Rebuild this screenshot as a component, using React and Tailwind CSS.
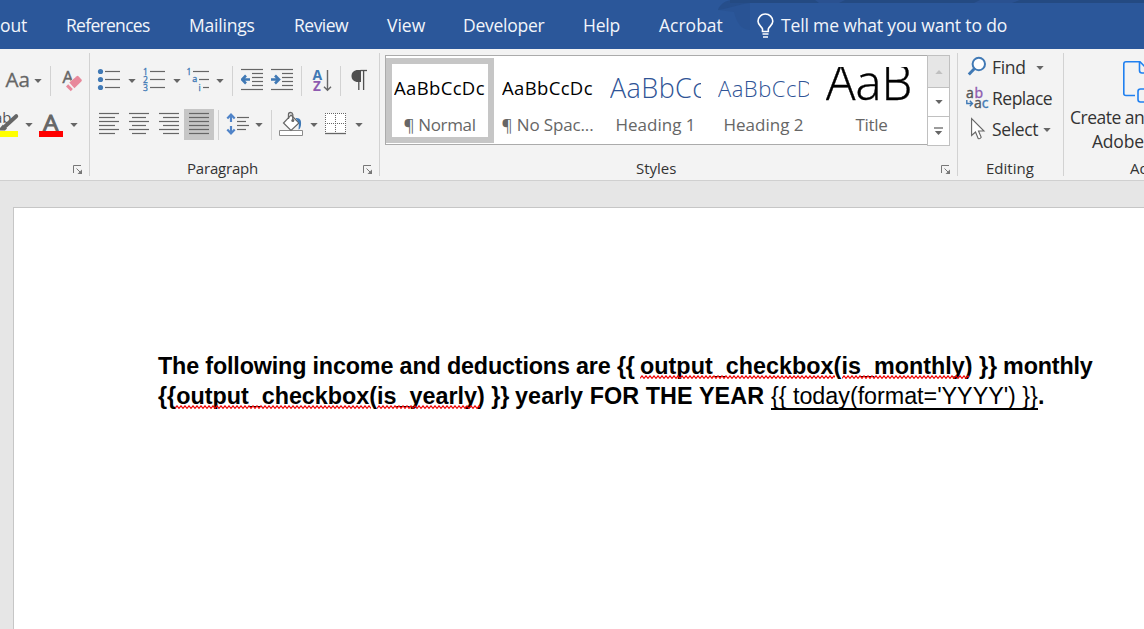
import React from 'react';

const G = '#666666';
const BLUE = '#4079b5';

function Icon({ w, h = 31, className = '', children }) {
  return (
    <svg width={w} height={h} viewBox={`0 0 ${w} ${h}`} fill="none" className={`block shrink-0 ${className}`}>
      {children}
    </svg>
  );
}

function Arrow({ className = '' }) {
  return (
    <Icon w={8} h={4} className={className}>
      <path d="M0.3 0h7.4L4 4z" fill={G} />
    </Icon>
  );
}

function Sep({ className = '' }) {
  return <div className={`h-[30px] w-px shrink-0 bg-[#d2d2d2] ${className}`} />;
}

function Lines({ rows, x = 0 }) {
  return rows.map(([a, b, y], i) => (
    <path key={i} d={`M${a + x} ${y}H${b + x}`} stroke={G} strokeWidth="1.2" />
  ));
}

function Launcher({ className = '' }) {
  return (
    <Icon w={10} h={10} className={className}>
      <path d="M0.5 8V0.5H8" stroke="#777" />
      <path d="M3.5 3.5L7.5 7.5" stroke="#777" />
      <path d="M9 4.5V9H4.5z" fill="#777" />
    </Icon>
  );
}

function GroupLabel({ children, className = '' }) {
  return (
    <div className={`flex h-5 items-center whitespace-nowrap text-[15px] text-[#333] ${className}`}>{children}</div>
  );
}

const tabs = [
  ['References', 'w-[123px] tracking-[-0.7px]'],
  ['Mailings', 'w-[105px] tracking-[-0.2px]'],
  ['Review', 'w-[93px] tracking-[-0.5px]'],
  ['View', 'w-[76px]'],
  ['Developer', 'w-[120px] tracking-[-0.25px]'],
  ['Help', 'w-[76px] tracking-[-0.2px]'],
  ['Acrobat', 'w-[97px]'],
];

function TabBar() {
  return (
    <header className="relative h-[49px] overflow-hidden bg-[#2b579a] text-[17.5px] text-[#f2f5fa]">
      <svg className="absolute left-[710px] top-0" width="434" height="34" viewBox="0 0 434 34" fill="none">
        <path d="M8 10C10 4 16 0 24 0H40V30C30 30 26 20 24 12z" fill="#295394" />
        <path d="M8 10C10 4 16 0 24 0H40V3C30 4 20 8 8 10z" fill="#264e8b" />
        <path d="M20 0H434V3H20z" fill="#244a82" />
        <path d="M105 0h30l-6 3h-20zM270 0h40l-8 3h-38z" fill="#2a5190" />
      </svg>
      <div className="relative flex h-full items-center pt-0.5 whitespace-nowrap">
        <div className="flex w-[66px] justify-start">
          <span className="tracking-[-0.1px]">out</span>
        </div>
        {tabs.map(([t, c]) => (
          <div key={t} className={`shrink-0 ${c}`}>
            {t}
          </div>
        ))}
        <Icon w={25} h={26}>
          <path
            d="M6.5 18.5V16C5.5 13.5 2 12 2 8.2A7.4 7.4 0 0 1 9.4 1a7.4 7.4 0 0 1 7.4 7.2c0 3.8-3.5 5.3-4.5 7.8v2.5zM6.5 21h6M7 24h5"
            stroke="#fff"
            strokeWidth="1.6"
          />
        </Icon>
        <span className="tracking-[-0.15px]">Tell me what you want to do</span>
      </div>
    </header>
  );
}

function FontGroup() {
  return (
    <section className="flex h-full w-[90px] shrink-0 flex-col">
      <div className="mt-4 flex h-[31px] items-center">
        <Icon w={34}>
          <text x="5.5" y="22" fontSize="20.5" fontFamily="Open Sans" fill={G} stroke={G} strokeWidth="0.3" textLength="24.5" lengthAdjust="spacingAndGlyphs">
            Aa
          </text>
        </Icon>
        <Arrow />
        <Sep className="ml-2" />
        <Icon w={24} className="ml-[10px]">
          <text x="1.5" y="17.5" fontSize="17" fontFamily="Open Sans" fill={G} stroke={G} strokeWidth="0.5">
            A
          </text>
          <path d="M5 20.5L15.5 10.5 21.8 16.5 11.2 26.8z" fill="#f3f3f3" />
          <path d="M8.3 17.6L15.7 11.2Q16.7 10.4 17.7 11.4L20.5 14.4Q21.3 15.5 20.3 16.5L13.4 23.2z" fill="#e8889b" />
          <path d="M7.2 19.2L11.8 24 9.8 26.2 5 21.6z" fill="#e8889b" />
        </Icon>
      </div>
      <div className="mt-[13px] flex h-[31px] items-center">
        <Icon w={25}>
          <text x="-6" y="14" fontSize="15" fontFamily="Open Sans" fill="#555">
            ab
          </text>
          <path d="M18 7L6.5 18.5" stroke="#f3f3f3" strokeWidth="6" />
          <path d="M16.2 7.2L5.5 17" stroke={G} strokeWidth="4" strokeLinecap="round" />
          <path d="M3 15.5L7 19.5L5 21.5H0V19z" fill={G} />
          <path d="M0 22H18V28H0z" fill="#ffff00" />
        </Icon>
        <Arrow className="mt-px" />
        <Icon w={24} className="ml-[6px]">
          <text x="4" y="21.5" fontSize="22" fontFamily="Open Sans" fill={G} stroke={G} strokeWidth="0.9" textLength="15.5" lengthAdjust="spacingAndGlyphs">
            A
          </text>
          <path d="M0 22H24V28H0z" fill="#ff0000" />
        </Icon>
        <Arrow className="ml-[7px] mt-px" />
      </div>
      <div className="mt-[18px] flex h-5 items-center">
        <Launcher className="ml-[73px] mt-[3px]" />
      </div>
    </section>
  );
}

function ParagraphGroup() {
  return (
    <section className="flex h-full w-[290px] shrink-0 flex-col">
      <div className="mt-4 flex h-[31px] items-center">
        <Icon w={31} className="ml-[7px]">
          <circle cx="3.5" cy="6.5" r="2.6" fill={BLUE} />
          <circle cx="3.5" cy="14.5" r="2.6" fill={BLUE} />
          <circle cx="3.5" cy="22.5" r="2.6" fill={BLUE} />
          <Lines rows={[[8, 23, 6.5], [8, 23, 14.5], [8, 23, 22.5]]} />
        </Icon>
        <Arrow />
        <Icon w={31} className="ml-[6px]">
          <g fill={BLUE} stroke={BLUE} strokeWidth="0.3" fontFamily="Open Sans" fontSize="8.5">
            <text x="1" y="10">1</text>
            <text x="1" y="18">2</text>
            <text x="1" y="26">3</text>
          </g>
          <Lines rows={[[8, 23, 6.5], [8, 23, 14.5], [8, 23, 22.5]]} />
        </Icon>
        <Arrow />
        <Icon w={30} className="ml-[5px]">
          <g fill={BLUE} stroke={BLUE} strokeWidth="0.3" fontFamily="Open Sans" fontSize="8.5">
            <text x="0.5" y="10">1</text>
            <text x="6.3" y="17" fontSize="9">a</text>
            <text x="12.5" y="25.5">i</text>
          </g>
          <Lines rows={[[7, 23, 6.5], [13, 23, 14.5], [17, 23, 22.5]]} />
        </Icon>
        <Arrow />
        <Sep className="ml-2" />
        <Icon w={30} className="ml-2">
          <Lines rows={[[0, 22, 4.5], [11, 22, 8.5], [11, 22, 12.5], [11, 22, 16.5], [11, 22, 20.5], [0, 22, 24.5]]} />
          <path d="M9 14.5H2M5 10.5L1 14.5L5 18.5" stroke={BLUE} strokeWidth="2.6" />
        </Icon>
        <Icon w={30}>
          <Lines rows={[[0, 22, 4.5], [11, 22, 8.5], [11, 22, 12.5], [11, 22, 16.5], [11, 22, 20.5], [0, 22, 24.5]]} />
          <path d="M0 14.5H7M4 10.5L8 14.5L4 18.5" stroke={BLUE} strokeWidth="2.6" />
        </Icon>
        <Sep />
        <Icon w={28} className="ml-[10px]">
          <text x="0.5" y="14.5" fontSize="14" fontWeight="700" fontFamily="Open Sans" fill={BLUE}>
            A
          </text>
          <text x="1" y="26" fontSize="13.5" fontWeight="700" fontFamily="Open Sans" fill="#8e5bb0">
            Z
          </text>
          <path d="M15.5 5V25M12 21.8L15.5 25.2L19 21.8" stroke={G} strokeWidth="1.4" />
        </Icon>
        <Sep />
        <Icon w={22} className="ml-[9px]">
          <path d="M10.5 5.5H17" stroke="#555" strokeWidth="1.3" />
          <path d="M8 5H11V17H8C4 17 1.5 14.5 1.5 11S4 5 8 5z" fill="#505050" />
          <path d="M8.8 5V25M13.6 5V25" stroke="#505050" strokeWidth="1.3" />
        </Icon>
      </div>
      <div className="mt-[13px] flex h-[31px] items-center">
        <Icon w={30} className="ml-2">
          <Lines x={1} rows={[[0, 20, 4.5], [0, 16, 8.5], [0, 20, 12.5], [0, 16, 16.5], [0, 20, 20.5], [0, 16, 24.5]]} />
        </Icon>
        <Icon w={30}>
          <Lines x={1} rows={[[0, 20, 4.5], [3, 17, 8.5], [0, 20, 12.5], [3, 17, 16.5], [0, 20, 20.5], [3, 17, 24.5]]} />
        </Icon>
        <Icon w={26}>
          <Lines x={1} rows={[[0, 20, 4.5], [4, 20, 8.5], [0, 20, 12.5], [4, 20, 16.5], [0, 20, 20.5], [4, 20, 24.5]]} />
        </Icon>
        <div className="h-[31px] w-[30px] bg-[#c6c6c6] pl-[5px]">
          <Icon w={20}>
            <Lines rows={[[0, 20, 4.5], [0, 20, 8.5], [0, 20, 12.5], [0, 20, 16.5], [0, 20, 20.5], [0, 20, 24.5]]} />
          </Icon>
        </div>
        <Sep className="ml-1" />
        <Icon w={29} className="ml-[7px]">
          <path d="M5 6V13M1.3 9.5L5 5.5L8.7 9.5M5 17V24M1.3 20.5L5 24.5L8.7 20.5" stroke="#4f83c8" strokeWidth="2.2" />
          <Lines rows={[[11, 23, 8.5], [11, 20, 12.5], [11, 23, 16.5], [11, 20, 20.5]]} />
        </Icon>
        <Arrow />
        <Sep className="ml-2" />
        <Icon w={31} className="ml-[7px]">
          <path d="M0.5 21.5H23.5V26.5H0.5z" fill="#fff" stroke="#8a8a8a" />
          <path d="M12 6L20 14L12 21.5L4.5 14z" fill="#fff" stroke={G} strokeWidth="1.2" />
          <path d="M9.5 10V5.5Q9.5 3.5 11.5 3.5T13.8 5.5V11" stroke={G} strokeWidth="1.3" />
          <circle cx="13.8" cy="11.5" r="1.5" fill={G} />
          <path d="M16.5 9C21.5 8.5 22.5 11.5 22 16C21.5 19 20.5 20.5 19.5 20.5L20 14z" fill={BLUE} />
        </Icon>
        <Arrow />
        <Icon w={30} className="ml-[7px]">
          <path d="M0 4H21V24H0z" fill="#fff" />
          <path d="M0 4.5H21M0 14.5H21M0.5 4V24M10.5 4V24M20.5 4V24" stroke="#666" strokeDasharray="1 1" />
          <path d="M0 24.5H21" stroke={G} strokeWidth="1.3" />
        </Icon>
        <Arrow />
      </div>
      <div className="mt-[18px] flex h-5 items-center">
        <GroupLabel className="ml-[97px] w-[176px] tracking-[-0.2px]">Paragraph</GroupLabel>
        <Launcher className="mt-[3px]" />
      </div>
    </section>
  );
}

const styleItems = [
  ['AaBbCcDc', '¶ Normal', 'text-[18.5px] leading-[42px] text-black tracking-[0.35px]', 'tracking-[-0.35px]'],
  ['AaBbCcDc', '¶ No Spac...', 'text-[18.5px] leading-[42px] text-black tracking-[0.35px]', 'tracking-[-0.15px]'],
  ['AaBbCc', 'Heading 1', 'text-[27px] leading-[41px] font-light text-[#2f5496] tracking-[0.4px]', ''],
  ['AaBbCcD', 'Heading 2', 'text-[22px] leading-[43px] font-light text-[#2f5496] tracking-[0.5px]', ''],
  ['AaB', 'Title', 'text-[49px] leading-[28px] font-light text-black [-webkit-text-stroke:0.4px_black]', 'tracking-[-0.3px]'],
];

function StylesGroup() {
  return (
    <section className="flex h-full w-[577px] shrink-0 flex-col pl-[5px]">
      <div className="mt-[6px] flex h-[91px]">
        <div className="flex h-[90px] w-[542px] border border-r-0 border-[#ababab] bg-white pt-[2px]">
          {styleItems.map(([sample, name, cls, nameCls], i) => (
            <div
              key={name}
              className={`h-[85px] w-[108px] shrink-0 border-[6px] ${i === 0 ? 'border-[#c6c6c6]' : 'border-transparent'}`}
            >
              <div className="ml-[2px] mt-[3px] h-[40px] w-[91px] overflow-hidden">
                <div className={`whitespace-nowrap ${cls}`}>{sample}</div>
              </div>
              <div className={`mt-[6px] -ml-px text-center text-[17px] leading-[24px] whitespace-nowrap text-[#666] ${nameCls}`}>{name}</div>
            </div>
          ))}
        </div>
        <div className="flex w-[23px] flex-col border border-[#c0c0c0] bg-white">
          <div className="flex h-8 items-center justify-center border-b border-[#c0c0c0] bg-[#e6e6e6]">
            <Icon w={8} h={4}>
              <path d="M0.3 4h7.4L4 0z" fill="#c0c0c0" />
            </Icon>
          </div>
          <div className="flex h-[29px] items-center justify-center border-b border-[#c0c0c0]">
            <Arrow />
          </div>
          <div className="flex flex-1 items-center justify-center">
            <Icon w={9} h={8}>
              <path d="M0 1H9" stroke={G} strokeWidth="1.3" />
              <path d="M0.8 4h7.4L4.5 8z" fill={G} />
            </Icon>
          </div>
        </div>
      </div>
      <div className="mt-[12px] flex h-5 items-center">
        <GroupLabel className="ml-[251px] w-[305px]">Styles</GroupLabel>
        <Launcher className="mt-[3px]" />
      </div>
    </section>
  );
}

function EditingGroup() {
  return (
    <section className="flex h-full w-[105px] shrink-0 flex-col text-[17.5px] text-[#333]">
      <div className="mt-[3px] flex h-[31px] items-center whitespace-nowrap">
        <Icon w={34}>
          <circle cx="20.8" cy="12" r="6.2" fill="#fff" stroke={BLUE} strokeWidth="2" />
          <path d="M16.3 16.8L10.8 22.5" stroke={BLUE} strokeWidth="3" />
        </Icon>
        <span className="w-[44px] tracking-[-0.3px]">Find</span>
        <Arrow />
      </div>
      <div className="flex h-[31px] items-center whitespace-nowrap">
        <Icon w={34}>
          <g fontFamily="Open Sans" fontSize="14" strokeWidth="0.4">
            <text x="8" y="15" fill="#555" stroke="#555">a</text>
            <text x="16.5" y="15" fill="#8e5bb0" stroke="#8e5bb0">b</text>
            <text x="16" y="25" fill="#555" stroke="#555">a</text>
            <text x="23.8" y="25" fill={BLUE} stroke={BLUE}>c</text>
          </g>
          <path d="M8.8 17V20.5H14M11.8 17.8L14.5 20.5L11.8 23.2" stroke={BLUE} strokeWidth="1.4" />
        </Icon>
        <span className="tracking-[-0.5px]">Replace</span>
      </div>
      <div className="flex h-[31px] items-center whitespace-nowrap">
        <Icon w={34}>
          <path
            d="M13.6 4.5V21.5L17.5 18L20.2 24.5Q22 25.3 23.2 23.2L20.5 17H26z"
            fill="#fff"
            stroke={G}
            strokeWidth="1.1"
          />
        </Icon>
        <span className="w-[51px] tracking-[-0.35px]">Select</span>
        <Arrow />
      </div>
      <GroupLabel className="mt-[13px] ml-[28px]">Editing</GroupLabel>
    </section>
  );
}

function AcrobatGroup() {
  return (
    <section className="flex h-full w-[80px] shrink-0 flex-col overflow-hidden text-[17.5px] whitespace-nowrap text-[#333]">
      <Icon w={80} h={48} className="mt-[7px]">
        <path
          d="M71 39.5H62Q59.8 39.5 59.8 37.5V8Q59.8 5.8 62 5.8H76L84 14M75.5 6V14.5Q75.5 17 78 17H84M84 33H76.5Q74 33 74 35.5V43.5Q74 46 76.5 46H84"
          stroke="#2080f0"
          strokeWidth="1.6"
        />
      </Icon>
      <div className="ml-[6px] mt-[1px] h-6 leading-6 tracking-[-0.5px]">Create an</div>
      <div className="ml-[28px] h-6 leading-6 tracking-[-0.2px]">Adobe PDF</div>
      <GroupLabel className="mt-[5px] ml-[66px]">Adobe Acrobat</GroupLabel>
    </section>
  );
}

function Divider() {
  return <div className="mt-1 -ml-px h-[123px] w-px shrink-0 bg-[#d2d2d2]" />;
}

function Squiggle({ w, className = '' }) {
  const n = Math.ceil(w / 4);
  let d = 'M0 3.4';
  for (let i = 0; i < n; i++) d += 'l2 -2.6l2 2.6';
  return (
    <svg width={w} height="4" viewBox={`0 0 ${w} 4`} fill="none" className={`absolute ${className}`}>
      <path d={d} stroke="#f00000" strokeWidth="1.1" />
    </svg>
  );
}

export default function App() {
  return (
    <div className="flex h-[629px] w-[1144px] flex-col overflow-hidden bg-[#e6e6e6] font-['Open_Sans',sans-serif]">
      <TabBar />
      <div className="flex h-[132px] shrink-0 border-b border-[#d0d0d0] bg-[#f3f3f3]">
        <FontGroup />
        <Divider />
        <ParagraphGroup />
        <Divider />
        <StylesGroup />
        <div className="w-px shrink-0" />
        <Divider />
        <EditingGroup />
        <div className="w-px shrink-0" />
        <Divider />
        <AcrobatGroup />
      </div>
      <main className="ml-[13px] mt-[26px] flex-1 border-l border-t border-[#c6c6c6] bg-white pl-[144px] pt-[143px] font-['Liberation_Sans',Arial,sans-serif] text-[23.33px] leading-[30px] whitespace-pre text-black">
        <div className="flex font-bold">
          <span className="w-[482px] tracking-[-0.16px]">{'The following income and deductions are {{'}</span>
          <span className="relative w-[339px] tracking-[0.03px]">
            output_checkbox(is_monthly)
            <Squiggle w={195} className="left-0 top-[24px]" />
            <Squiggle w={127} className="left-[202px] top-[24px]" />
          </span>
          <span className="tracking-[-0.18px]">{'}} monthly'}</span>
        </div>
        <div className="flex font-bold">
          <span className="relative w-[357px]">
            {'{{output_checkbox(is_yearly) }}'}
            <Squiggle w={196} className="left-[17px] top-[24px]" />
            <Squiggle w={103} className="left-[219px] top-[24px]" />
          </span>
          <span className="w-[256px] tracking-[0.1px]">yearly FOR THE YEAR</span>
          <span className="mb-[-2px] h-[29px] w-[267px] border-b-2 border-black font-normal tracking-[-0.03px]">{"{{ today(format='YYYY') }}"}</span>
          <span>.</span>
        </div>
      </main>
    </div>
  );
}
